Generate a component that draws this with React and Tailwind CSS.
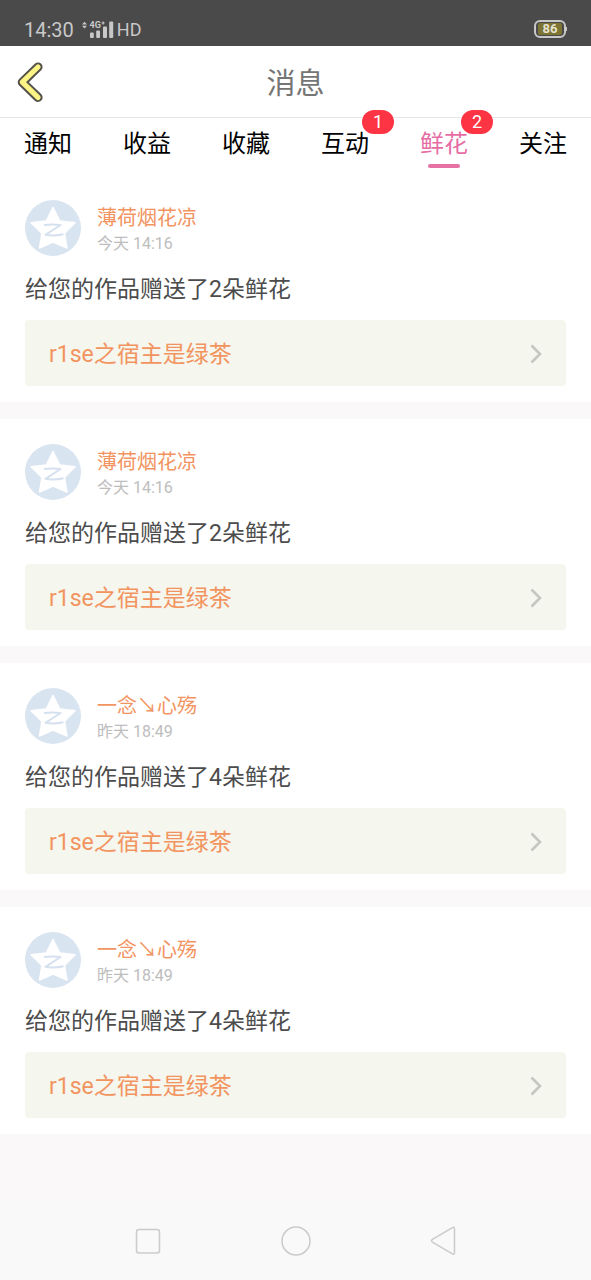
import React, { useState } from "react";

const TABS = [
  { label: "通知" },
  { label: "收益" },
  { label: "收藏" },
  { label: "互动", count: 1 },
  { label: "鲜花", count: 2 },
  { label: "关注" },
];

const MESSAGES = [
  { id: 1, user: "薄荷烟花凉", time: "今天 14:16", flowers: 2, work: "r1se之宿主是绿茶" },
  { id: 2, user: "薄荷烟花凉", time: "今天 14:16", flowers: 2, work: "r1se之宿主是绿茶" },
  { id: 3, user: "一念↘心殇", time: "昨天 18:49", flowers: 4, work: "r1se之宿主是绿茶" },
  { id: 4, user: "一念↘心殇", time: "昨天 18:49", flowers: 4, work: "r1se之宿主是绿茶" },
];

function SignalIcon() {
  return (
    <svg className="h-5 w-8" viewBox="0 0 32 20" fill="#c8c8c8" aria-hidden="true">
      <path d="M0 4.4 2.5 1.8 5 4.4zM0 5.8h5L2.5 8.4z" />
      <text x="7.5" y="8.2" fontSize="9" fontWeight="700">
        4G
      </text>
      <path d="M19.6 3h3M21.1 1.5v3" stroke="#c8c8c8" strokeWidth="1.2" />
      <rect x="8" y="12.5" width="3.8" height="5.5" rx="1" />
      <rect x="14.2" y="10.5" width="3.8" height="7.5" rx="1" />
      <rect x="21" y="6.5" width="4" height="11.5" rx="1" />
      <rect x="27.2" y="1.5" width="4" height="16.5" rx="1" />
    </svg>
  );
}

function StatusBar() {
  return (
    <div className="flex h-[46px] items-end justify-between bg-[#4a4a4a] pr-6 pb-1 pl-6 text-[#c8c8c8]">
      <div className="flex items-center">
        <span className="text-xl leading-6">14:30</span>
        <span className="ml-2">
          <SignalIcon />
        </span>
        <span className="ml-[3px] text-lg leading-6">HD</span>
      </div>
      <div className="flex items-center pb-1">
        <div className="flex h-[18px] w-8 items-center justify-center rounded-md border-2 border-[#c8c8c8] p-px">
          <span className="flex h-3 w-6 items-center justify-center rounded-xs bg-[#7b7433] text-[13px] leading-3 font-bold text-[#e6e2cf]">
            86
          </span>
        </div>
        <span className="h-1 w-px bg-[#c8c8c8]" />
      </div>
    </div>
  );
}

function Header() {
  return (
    <header className="grid h-[72px] grid-cols-[1fr_auto_1fr] items-center border-b border-[#e6e6e6] px-4">
      <button type="button" aria-label="返回" className="justify-self-start">
        <svg className="h-10 w-7" viewBox="0 0 28 40" fill="none" strokeLinecap="round" strokeLinejoin="round" aria-hidden="true">
          <path d="M22 5 6.3 20.2 22 35.4" stroke="#55524a" strokeWidth="9.2" />
          <path d="M22 5 6.3 20.2 22 35.4" stroke="#fcf485" strokeWidth="5.2" />
        </svg>
      </button>
      <h1 className="pt-1 text-[29px] leading-10 text-[#757575]">消息</h1>
    </header>
  );
}

function Tabs({ active, onSelect }) {
  return (
    <nav className="flex h-[57px] justify-between px-6">
      {TABS.map((tab) => (
        <button
          key={tab.label}
          type="button"
          onClick={() => onSelect(tab.label)}
          className={
            tab.label === active
              ? "relative flex flex-col items-center pt-2.5 text-2xl text-[#e66da4]"
              : "relative flex flex-col items-center pt-2.5 text-2xl text-black"
          }
        >
          <span>{tab.label}</span>
          {tab.label === active && <span className="mt-1 h-1 w-8 rounded-xs bg-[#e571a5]" />}
          {tab.count && (
            <span className="absolute -top-2 left-[41px] flex h-6 w-8 items-center justify-center rounded-full bg-[#fd3444] text-lg leading-6 text-white">
              {tab.count}
            </span>
          )}
        </button>
      ))}
    </nav>
  );
}

function Avatar() {
  return (
    <svg className="size-14" viewBox="0 0 56 56" aria-hidden="true">
      <circle cx="28" cy="28" r="28" fill="#d9e4f1" />
      <path
        d="M28 7.5 34.8 21 50 22.8 39.4 33.5 42 48 28 42 14.5 48 17 33.5 6 22.8 21.2 21z"
        fill="#fff"
        stroke="#fff"
        strokeWidth="1.5"
        strokeLinejoin="round"
      />
      <path d="M19 25Q27 23.8 35.5 25L20.5 34.8Q29 36.2 38.5 34.2" fill="none" stroke="#d6e1ef" strokeWidth="2" strokeLinejoin="round" />
    </svg>
  );
}

function MessageCard({ message }) {
  return (
    <article className="bg-white px-[25px] pt-[25px] pb-4">
      <div className="flex items-center gap-4">
        <Avatar />
        <div className="pt-1">
          <h2 className="text-xl leading-7 text-[#f2945f]">{message.user}</h2>
          <p className="text-base leading-6 text-[#bdbdbd]">{message.time}</p>
        </div>
      </div>
      <p className="mt-[18px] text-[23px] leading-8 text-[#4c4c4c]">给您的作品赠送了{message.flowers}朵鲜花</p>
      <a
        href="#work"
        className="mt-3.5 flex h-[66px] items-center justify-between rounded-sm bg-[#f5f6ed] px-6 text-[23px] leading-8 text-[#f2945f]"
      >
        <span className="pt-1">{message.work}</span>
        <svg className="mt-0.5 h-5 w-3" viewBox="0 0 12 20" fill="none" stroke="#c6c6c1" strokeWidth="2.6" aria-hidden="true">
          <path d="M1.5 1.5 10 10 1.5 18.5" />
        </svg>
      </a>
    </article>
  );
}

function SystemNav() {
  return (
    <footer className="mt-auto grid h-[79px] grid-cols-3 items-center justify-items-center bg-[#f9f9f9] px-[12.5%]">
      <button type="button" aria-label="最近任务">
        <svg className="size-8" viewBox="0 0 32 32" fill="none" stroke="#cbcbcb" strokeWidth="1.5" aria-hidden="true">
          <rect x="4.5" y="4.5" width="23" height="23.5" rx="2.5" />
        </svg>
      </button>
      <button type="button" aria-label="主屏幕">
        <svg className="size-8" viewBox="0 0 32 32" fill="none" stroke="#cbcbcb" strokeWidth="1.5" aria-hidden="true">
          <circle cx="16" cy="16" r="14" />
        </svg>
      </button>
      <button type="button" aria-label="返回上一页">
        <svg className="size-8" viewBox="0 0 32 32" fill="none" stroke="#cbcbcb" strokeWidth="1.5" strokeLinejoin="round" aria-hidden="true">
          <path d="M25 2.8Q27.5 1.5 27.5 4V27.5Q27.5 30 25 28.7L5.4 17.2Q3.6 15.8 5.4 14.4z" />
        </svg>
      </button>
    </footer>
  );
}

export default function App() {
  const [active, setActive] = useState("鲜花");
  return (
    <div className="flex min-h-screen flex-col bg-[#faf8f9] font-['Roboto','Noto_Sans_CJK_SC',sans-serif]">
      <StatusBar />
      <div className="bg-white">
        <Header />
        <Tabs active={active} onSelect={setActive} />
      </div>
      <main className="flex flex-col gap-[17px]">
        {MESSAGES.map((message) => (
          <MessageCard key={message.id} message={message} />
        ))}
      </main>
      <SystemNav />
    </div>
  );
}
